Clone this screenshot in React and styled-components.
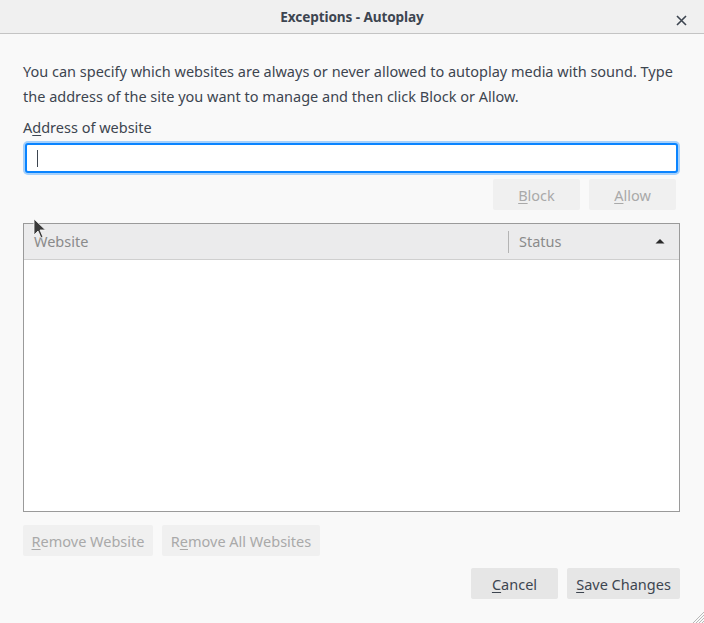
import React from 'react'
import styled, { createGlobalStyle } from 'styled-components'

const Global = createGlobalStyle`
  html, body {
    margin: 0;
    padding: 0;
    background: #f9f9f9;
  }
  body {
    font-family: "Noto Sans", "Open Sans", sans-serif;
    color: #3d4550;
  }
`

const Dialog = styled.div`
  position: relative;
  width: 704px;
  height: 623px;
  background: #f9f9f9;
  overflow: hidden;
`

const TitleBar = styled.div`
  height: 33px;
  background: #f0f0f0;
  border-bottom: 1px solid #c4c4c4;
  display: flex;
  align-items: center;
  justify-content: center;
  position: relative;
`

const Title = styled.div`
  font-size: 13.6px;
  font-weight: 700;
  color: #3d4550;
  letter-spacing: -0.1px;
`

const Close = styled.div`
  position: absolute;
  right: 16px;
  top: 10px;
  width: 13px;
  height: 13px;
`

const Content = styled.div`
  padding: 25px 24px 0 23px;
  display: flex;
  flex-direction: column;
`

const Intro = styled.p`
  margin: 0;
  font-size: 14.5px;
  line-height: 25px;
`

const Label = styled.label`
  margin-top: 8px;
  font-size: 14.5px;
  line-height: 20px;
  u { text-decoration-thickness: 1px; text-underline-offset: 2px; }
`

const Input = styled.div`
  margin: 6px 2px 0 2px;
  height: 26px;
  background: #fff;
  border: 2px solid #0a84ff;
  border-radius: 3px;
  box-shadow: 0 0 0 2px rgba(10, 132, 255, 0.35);
  display: flex;
  align-items: center;
  padding-left: 10px;
`

const Caret = styled.div`
  width: 1px;
  height: 17px;
  background: #3d4550;
`

const Row = styled.div`
  display: flex;
  justify-content: ${p => (p.end ? 'flex-end' : 'flex-start')};
  gap: 9px;
  margin-top: ${p => p.top}px;
  padding-right: ${p => p.pr || 0}px;
`

const Button = styled.div`
  height: 31px;
  min-width: ${p => p.w || 0}px;
  padding: 0 6px;
  box-sizing: border-box;
  border-radius: 2px;
  background: ${p => (p.disabled ? '#f0f0f0' : '#e6e6e6')};
  color: ${p => (p.disabled ? '#a9a9a9' : '#3d4550')};
  font-size: 14.5px;
  display: flex;
  align-items: center;
  justify-content: center;
  u { text-decoration-thickness: 1px; text-underline-offset: 2px; }
`

const Table = styled.div`
  margin-top: 13px;
  height: 287px;
  border: 1px solid #9a9a9a;
  background: #fff;
  display: flex;
  flex-direction: column;
`

const Header = styled.div`
  height: 35px;
  background: #ebebec;
  border-bottom: 1px solid #cfcfcf;
  display: grid;
  grid-template-columns: 484px 1fr;
  align-items: center;
`

const HeadCell = styled.div`
  height: 20px;
  display: flex;
  align-items: center;
  justify-content: space-between;
  padding: 0 14px 2px 10px;
  font-size: 14.5px;
  color: #8a8a8a;
  border-left: ${p => (p.divided ? '1px solid #b4b4b4' : 'none')};
`

const Cursor = styled.svg`
  position: absolute;
  left: 33px;
  top: 218px;
`

const Grip = styled.svg`
  position: absolute;
  right: 0;
  bottom: 0;
`

export default function App() {
  return (
    <Dialog>
      <Global />
      <TitleBar>
        <Title>Exceptions - Autoplay</Title>
        <Close>
          <svg width="13" height="13" viewBox="0 0 13 13">
            <path d="M2 2 L11 11 M11 2 L2 11" stroke="#3d4550" strokeWidth="1.6" />
          </svg>
        </Close>
      </TitleBar>
      <Content>
        <Intro>
          You can specify which websites are always or never allowed to autoplay media with sound. Type the address of the site you want to manage and then click Block or Allow.
        </Intro>
        <Label>A<u>d</u>dress of website</Label>
        <Input><Caret /></Input>
        <Row end top={6} pr={4}>
          <Button disabled w={87}><span><u>B</u>lock</span></Button>
          <Button disabled w={87}><span><u>A</u>llow</span></Button>
        </Row>
        <Table>
          <Header>
            <HeadCell>Website</HeadCell>
            <HeadCell divided>
              Status
              <svg width="10" height="6" viewBox="0 0 10 6">
                <path d="M0.5 5.5 L5 1 L9.5 5.5 Z" fill="#2a2a2a" />
              </svg>
            </HeadCell>
          </Header>
        </Table>
        <Row top={13}>
          <Button disabled w={130}><span><u>R</u>emove Website</span></Button>
          <Button disabled w={158}><span>R<u>e</u>move All Websites</span></Button>
        </Row>
        <Row end top={12}>
          <Button w={87}><span><u>C</u>ancel</span></Button>
          <Button w={113}><span><u>S</u>ave Changes</span></Button>
        </Row>
      </Content>
      <Cursor width="14" height="22" viewBox="0 0 14 22">
        <path d="M1 1 L1 17 L5 13 L8 20 L10 19 L7 12 L12.5 12 Z" fill="#3a3a3a" stroke="#fafafa" strokeWidth="0.8" />
      </Cursor>
      <Grip width="12" height="12" viewBox="0 0 12 12">
        <path d="M12 1 L1 12 M12 4 L4 12 M12 7 L7 12 M12 10 L10 12" stroke="#b8b8b8" strokeWidth="1" />
      </Grip>
    </Dialog>
  )
}
